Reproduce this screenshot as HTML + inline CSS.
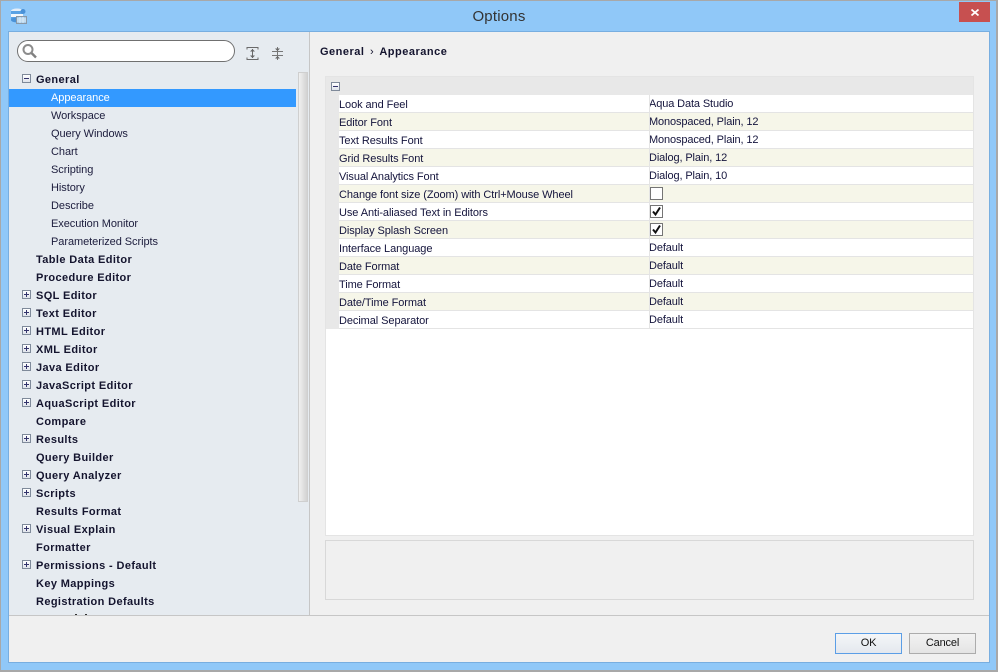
<!DOCTYPE html>
<html><head><meta charset="utf-8"><style>
html,body{margin:0;padding:0;width:998px;height:672px;overflow:hidden;background:#90c8f8}
*{box-sizing:border-box}
body{font-family:"Liberation Sans","DejaVu Sans",sans-serif;font-size:11px;color:#111133;position:relative}
.a{position:absolute}
.t{position:absolute;white-space:nowrap;line-height:18px;height:18px;font-size:11px;margin-top:1px}
.b{font-weight:bold;left:27px;color:#14142e;letter-spacing:.38px}
.c{left:42px;color:#1c1c3c;letter-spacing:-.06px}
.k{position:absolute;width:9px;height:9px;border:1px solid #7f8a9a;background:linear-gradient(#fff,#dfe3ea)}
.k:before{content:"";position:absolute;left:1px;top:3px;width:5px;height:1px;background:#33336b}
.k.p:after{content:"";position:absolute;left:3px;top:1px;width:1px;height:5px;background:#33336b}
.r{position:absolute;left:339px;width:634px;height:18px;border-bottom:1px solid #e4e4e4}
.r.o{background:#f6f6e9}.r.e{background:#fff}
.r span{position:absolute;left:0;top:3px;line-height:14px;font-size:11px;color:#14143c;white-space:nowrap;letter-spacing:-.08px}
.r span+span{left:310px;top:2px;color:#14143c;letter-spacing:-.12px}
.r i{position:absolute;left:310px;top:0;width:1px;height:18px;background:#e4e4e4}
.cb{position:absolute;left:311px;top:2px;width:13px;height:13px;border:1px solid #757575;background:#fff}
.btn{position:absolute;top:633px;width:67px;height:21px;text-align:center;line-height:19px;font-size:11px;letter-spacing:-.15px;color:#111;background:linear-gradient(#f2f2f2,#e4e4e4);border:1px solid #acacac}
</style></head><body>
<div class="a" style="left:0;top:0;width:998px;height:672px;border:solid #a8a8a8;border-width:1px 2px 2px 1px"></div>
<div class="a" style="left:959px;top:2px;width:31px;height:20px;background:#c75050"></div>
<svg class="a" style="left:971px;top:9px" width="8" height="7"><path d="M.5 .5L7.500 6.500M7.500 .5L.5 6.500" stroke="#fff" stroke-width="1.7"/></svg>
<svg class="a" style="left:10px;top:8px" width="18" height="17" viewBox="0 0 18 17">
<ellipse cx="7" cy="3" rx="6" ry="2.500" fill="#e4eef8"/><rect x="1" y="3" width="12" height="9" fill="#5aa2e4"/><ellipse cx="7" cy="12" rx="6" ry="2.500" fill="#4a92d8"/><rect x="1" y="6" width="12" height="3" fill="#f2f7fc"/>
<circle cx="13" cy="3.500" r="2.500" fill="#4a92d8"/><rect x="6.500" y="8.500" width="10" height="7" fill="#a9cbe8" stroke="#8a98a6"/><path d="M7 11H16M7 13H16M10 9V15M13 9V15" stroke="#dcecf8"/></svg>
<div class="a" style="left:0;top:7px;width:998px;text-align:center;font-size:15px;line-height:20px;color:#333;letter-spacing:.2px">Options</div>

<div class="a" style="left:8px;top:31px;width:982px;height:632px;border:1px solid #78aee0;background:#f0f0f0"></div>
<div class="a" style="left:9px;top:32px;width:301px;height:583px;background:#e6ebf0;border-right:1px solid #c6c6c6;overflow:hidden">
<div class="a" style="left:8px;top:8px;width:218px;height:22px;border:1px solid #707070;border-radius:11px;background:#fff"></div>
<svg class="a" style="left:12px;top:11px" width="16" height="16"><circle cx="7" cy="6.500" r="4.500" fill="none" stroke="#8c8c8c" stroke-width="2"/><path d="M10.500 10L15 14.500" stroke="#808080" stroke-width="2.400"/></svg>
<svg class="a" style="left:237px;top:14px" width="13" height="15"><path d="M1 3.500V1.500H12V3.500M1 11.500V13.500H12V11.500M6.500 3V12" stroke="#6a6a6a" fill="none"/><path d="M4 5.500L6.500 3L9 5.500ZM4 9.500L6.500 12L9 9.500Z" fill="#666"/></svg>
<svg class="a" style="left:262px;top:14px" width="13" height="15"><path d="M1 5.500H12M1 9.500H12M6.500 1V14" stroke="#777" fill="none"/><path d="M4 2.500L6.500 5L9 2.500ZM4 12.500L6.500 10L9 12.500Z" fill="#666"/></svg>
<div class="a" style="left:289px;top:40px;width:10px;height:430px;background:linear-gradient(90deg,#f0f0f0,#d2d2d2);border:1px solid #cfcfcf"></div>
<div class="a" style="left:0;top:57px;width:287px;height:18px;background:#3399ff"></div>
<div class="a" style="left:0;top:38px;width:300px;height:545px;">
<div class="k" style="left:13px;top:4px"></div><div class="t b" style="top:0">General</div>
<div class="t c" style="top:18px;color:#fff">Appearance</div>
<div class="t c" style="top:36px">Workspace</div>
<div class="t c" style="top:54px">Query Windows</div>
<div class="t c" style="top:72px">Chart</div>
<div class="t c" style="top:90px">Scripting</div>
<div class="t c" style="top:108px">History</div>
<div class="t c" style="top:126px">Describe</div>
<div class="t c" style="top:144px">Execution Monitor</div>
<div class="t c" style="top:162px">Parameterized Scripts</div>
<div class="t b" style="top:180px">Table Data Editor</div>
<div class="t b" style="top:198px">Procedure Editor</div>
<div class="k p" style="left:13px;top:220px"></div><div class="t b" style="top:216px">SQL Editor</div>
<div class="k p" style="left:13px;top:238px"></div><div class="t b" style="top:234px">Text Editor</div>
<div class="k p" style="left:13px;top:256px"></div><div class="t b" style="top:252px">HTML Editor</div>
<div class="k p" style="left:13px;top:274px"></div><div class="t b" style="top:270px">XML Editor</div>
<div class="k p" style="left:13px;top:292px"></div><div class="t b" style="top:288px">Java Editor</div>
<div class="k p" style="left:13px;top:310px"></div><div class="t b" style="top:306px">JavaScript Editor</div>
<div class="k p" style="left:13px;top:328px"></div><div class="t b" style="top:324px">AquaScript Editor</div>
<div class="t b" style="top:342px">Compare</div>
<div class="k p" style="left:13px;top:364px"></div><div class="t b" style="top:360px">Results</div>
<div class="t b" style="top:378px">Query Builder</div>
<div class="k p" style="left:13px;top:400px"></div><div class="t b" style="top:396px">Query Analyzer</div>
<div class="k p" style="left:13px;top:418px"></div><div class="t b" style="top:414px">Scripts</div>
<div class="t b" style="top:432px">Results Format</div>
<div class="k p" style="left:13px;top:454px"></div><div class="t b" style="top:450px">Visual Explain</div>
<div class="t b" style="top:468px">Formatter</div>
<div class="k p" style="left:13px;top:490px"></div><div class="t b" style="top:486px">Permissions - Default</div>
<div class="t b" style="top:504px">Key Mappings</div>
<div class="t b" style="top:522px">Registration Defaults</div>
</div>
<div class="a" style="left:66px;top:582px;width:2px;height:1px;background:#333"></div>
<div class="a" style="left:76px;top:582px;width:2px;height:1px;background:#333"></div>
</div>
<div class="a" style="left:9px;top:615px;width:980px;height:1px;background:#c6c6c6"></div>

<div class="a" style="left:320px;top:43px;font-weight:bold;font-size:11px;line-height:18px;color:#14142e;letter-spacing:.5px;white-space:nowrap">General <span style="font-weight:normal;margin:0 2px">&#8250;</span> Appearance</div>

<div class="a" style="left:325px;top:76px;width:649px;height:460px;background:#fff;border:1px solid #e4e4e4"></div>
<div class="a" style="left:326px;top:77px;width:647px;height:18px;background:#e8e8e8"></div>
<div class="a" style="left:326px;top:95px;width:13px;height:234px;background:#e8e8e8"></div>
<div class="k" style="left:331px;top:82px"></div>

<div class="r e" style="top:95px"><span>Look and Feel</span><span>Aqua Data Studio</span><i></i></div>
<div class="r o" style="top:113px"><span>Editor Font</span><span>Monospaced, Plain, 12</span><i></i></div>
<div class="r e" style="top:131px"><span>Text Results Font</span><span>Monospaced, Plain, 12</span><i></i></div>
<div class="r o" style="top:149px"><span>Grid Results Font</span><span>Dialog, Plain, 12</span><i></i></div>
<div class="r e" style="top:167px"><span>Visual Analytics Font</span><span>Dialog, Plain, 10</span><i></i></div>
<div class="r o" style="top:185px"><span>Change font size (Zoom) with Ctrl+Mouse Wheel</span><i></i><div class="cb"></div></div>
<div class="r e" style="top:203px"><span>Use Anti-aliased Text in Editors</span><i></i><div class="cb"><svg width="11" height="11" style="display:block"><path d="M2 5.500L4.500 8.500L9 1.500" fill="none" stroke="#111" stroke-width="2"/></svg></div></div>
<div class="r o" style="top:221px"><span>Display Splash Screen</span><i></i><div class="cb"><svg width="11" height="11" style="display:block"><path d="M2 5.500L4.500 8.500L9 1.500" fill="none" stroke="#111" stroke-width="2"/></svg></div></div>
<div class="r e" style="top:239px"><span>Interface Language</span><span>Default</span><i></i></div>
<div class="r o" style="top:257px"><span>Date Format</span><span>Default</span><i></i></div>
<div class="r e" style="top:275px"><span>Time Format</span><span>Default</span><i></i></div>
<div class="r o" style="top:293px"><span>Date/Time Format</span><span>Default</span><i></i></div>
<div class="r e" style="top:311px"><span>Decimal Separator</span><span>Default</span><i></i></div>

<div class="a" style="left:325px;top:540px;width:649px;height:60px;border:1px solid #d8d8d8;background:#f0f0f0"></div>
<div class="btn" style="left:835px;border-color:#5b9ee6;background:linear-gradient(#f4f6f8,#e4e8ee)">OK</div>
<div class="btn" style="left:909px">Cancel</div>
</body></html>
